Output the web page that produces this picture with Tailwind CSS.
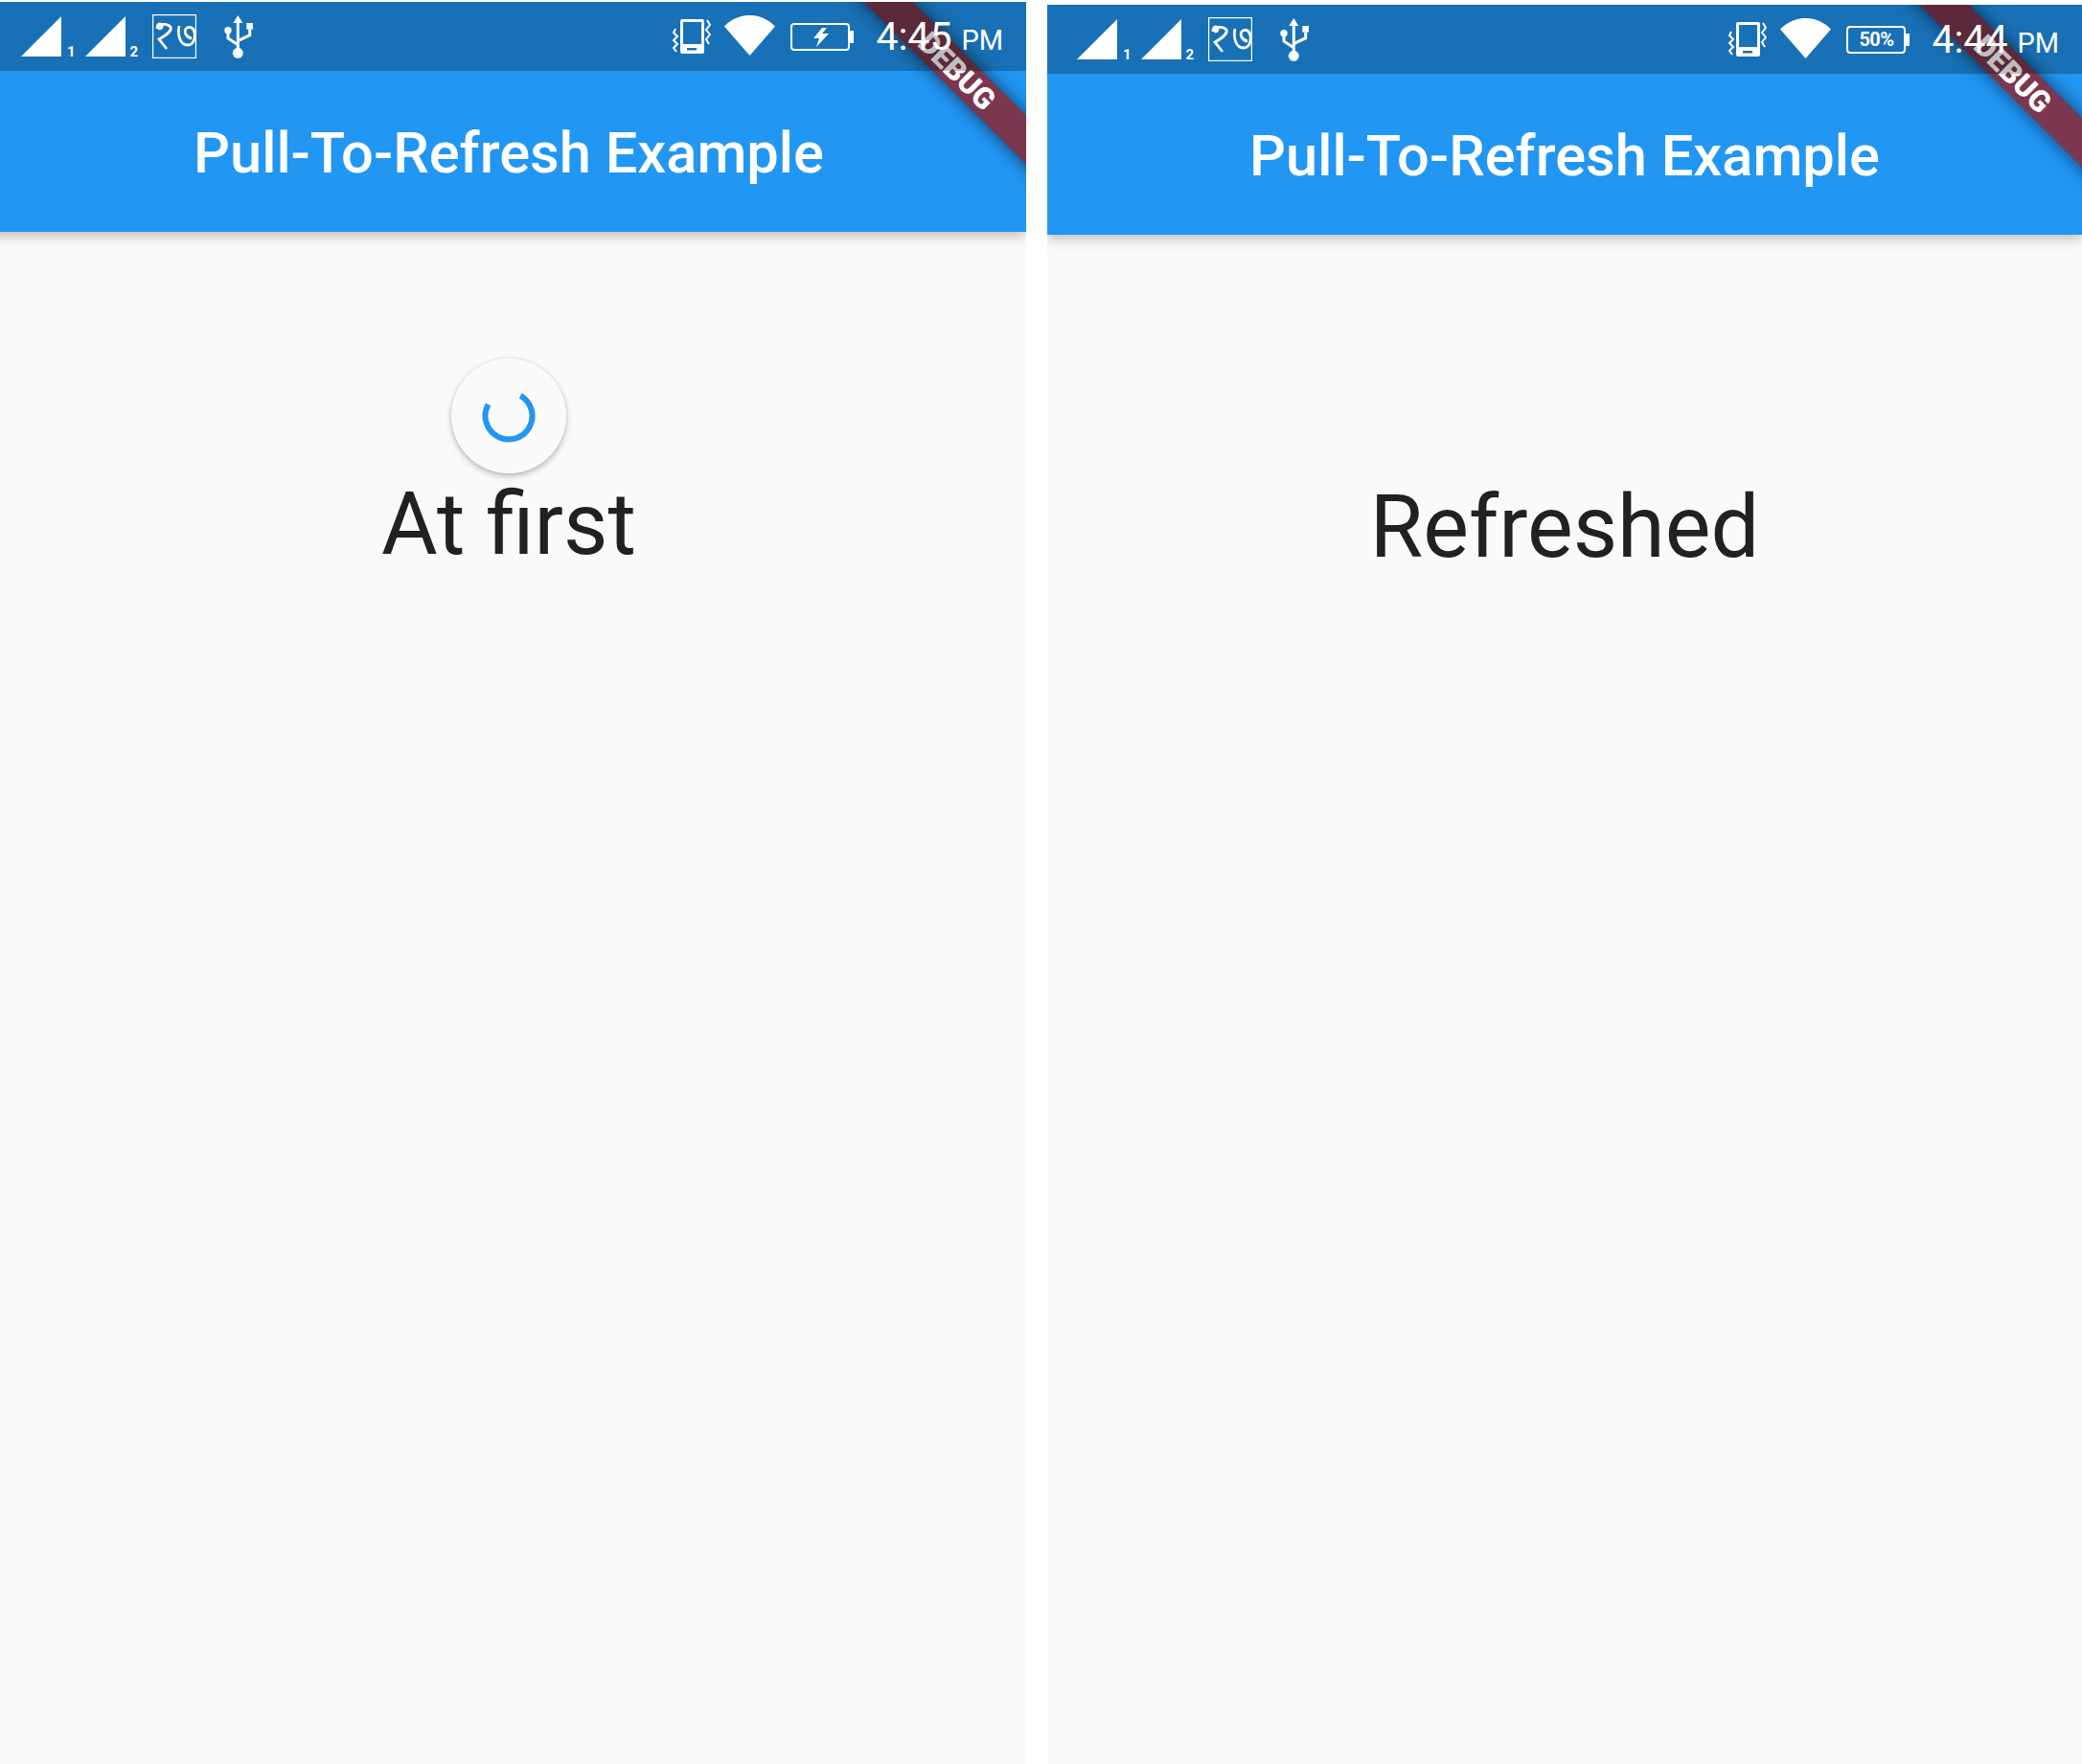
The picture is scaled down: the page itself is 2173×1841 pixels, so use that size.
<!DOCTYPE html>
<html lang="en">
<head>
  <meta charset="UTF-8">
  <title>Pull-To-Refresh Example</title>
  <script src="https://cdn.jsdelivr.net/npm/@tailwindcss/browser@4"></script>
</head>
<body class="bg-white font-['Roboto',sans-serif] overflow-hidden">
  <div class="flex items-start w-[2173px] h-[1841px]">

    <!-- left screen: cropped 9px on its left edge -->
    <div class="w-[1071px] h-[1839px] mt-[2px] overflow-hidden">
      <div class="relative w-[1080px] h-[1839px] -ml-[9px] overflow-hidden bg-[#fafafa]">
        <header class="bg-[#2196f3] h-[240px] pt-[78px] flex items-center justify-center text-white text-[59.6px] font-medium shadow-[0_4px_12px_rgba(0,0,0,0.25)]">Pull-To-Refresh Example</header>
        <p class="mt-[253px] text-center text-[90px] leading-[106px] text-[#212121]">At first</p>

        <!-- refresh indicator -->
        <div class="absolute left-[480px] top-[372px] w-[120px] h-[120px] rounded-full bg-[#fafafa] shadow-[0_3px_6px_rgba(0,0,0,0.25),0_0_3px_rgba(0,0,0,0.08)] flex items-center justify-center">
          <svg class="w-[60px] h-[60px]" viewBox="0 0 60 60" fill="none"><path d="M42.25 8.8A24.5 24.5 0 1 1 8.6 18.1" stroke="#2196f3" stroke-width="6"/></svg>
        </div>

        <!-- debug banner -->
        <div class="absolute -right-[128px] top-[54px] w-[400px] h-[36px] rotate-45 bg-[#7b3650] shadow-[0_0_18px_rgba(0,0,0,0.6)] flex items-center justify-center text-white text-[31px] leading-none font-black">DEBUG</div>

        <!-- status bar -->
        <div class="absolute left-0 top-0 w-full h-[72px] bg-black/25 flex items-center justify-between pl-[31px] pr-[24px] text-white">
          <div class="flex items-center">
            <svg class="w-[42px] h-[42px]" viewBox="0 0 42 42" fill="#fff"><path d="M0 42 42 0V42Z"/></svg>
            <span class="self-end ml-[6px] mb-[-1px] text-[15px] leading-[15px] font-bold">1</span>
            <svg class="ml-[10px] w-[42px] h-[42px]" viewBox="0 0 42 42" fill="#fff"><path d="M0 42 42 0V42Z"/></svg>
            <span class="self-end ml-[5px] mb-[-1px] text-[15px] leading-[15px] font-bold">2</span>
            <svg class="ml-[15px] w-[46px] h-[46px]" viewBox="0 0 46 46" fill="none" stroke="#fff" stroke-width="2.8"><rect x=".6" y=".6" width="44.8" height="44.8" stroke-width="1.2"/><path d="M5 15C5 9 9 9 10 12C10 15 7 16 6 13C8 10 15 9 19 13C21 18 12 23 7 26L15 36"/><path d="M28 12C26 22 29 32 37 32C43 32 45 25 44 19C43 13 38 12 35 15C33 18 35 24 41 25"/></svg>
            <svg class="ml-[29px] w-[30px] h-[45px]" viewBox="0 0 30 45" fill="#fff"><path d="M14.3 0 19.3 8H9.3Z"/><circle cx="14.3" cy="39.3" r="5.5"/><circle cx="4" cy="15.7" r="3.7"/><rect x="23.3" y="8" width="6.7" height="6.7"/><path d="M14.3 8V39M4 15.7V24L14.3 30.7M26.7 14.7V20.7L14.3 26.7" fill="none" stroke="#fff" stroke-width="3"/></svg>
          </div>
          <div class="flex items-center">
            <svg class="w-[40px] h-[36px]" viewBox="0 0 40 36" fill="none"><path fill="#fff" fill-rule="evenodd" d="M10 0H31A2 2 0 0 1 33 2V34A2 2 0 0 1 31 36H10A2 2 0 0 1 8 34V2A2 2 0 0 1 10 0ZM11 3V26H30V3ZM15 30V32.5H25V30Z"/><path d="M3 10 1 14 5 18 1 22 5 26 1 30 4 34M36 1 39 6 35 11 39 16 35 21 38 26" stroke="#fff" stroke-width="2"/></svg>
            <svg class="ml-[14px] -mt-[2px] w-[53px] h-[42px]" viewBox="0 0 53 42" fill="#fff"><path d="M26.5 42 0 11.5A36 36 0 0 1 53 11.5Z"/></svg>
            <svg class="ml-[16px] w-[66px] h-[29px]" viewBox="0 0 66 29" fill="none"><rect x="1" y="1" width="60" height="27" rx="3" stroke="#fff" stroke-width="2"/><path fill="#fff" d="M61 8H66V21H61Z"/><path fill="#fff" d="M33 5 24 16H30L27 25 40 11H33L38 5Z"/></svg>
            <div class="ml-[23px] mt-[3px] flex items-baseline">
              <span class="text-[41px] leading-[72px] w-[80px]">4:45</span>
              <span class="ml-[9px] text-[29px] leading-[72px]">PM</span>
            </div>
          </div>
        </div>
      </div>
    </div>

    <!-- right screen -->
    <div class="relative ml-[22px] mt-[5px] w-[1080px] h-[1836px] overflow-hidden bg-[#fafafa]">
      <header class="bg-[#2196f3] h-[240px] pt-[78px] flex items-center justify-center text-white text-[59.6px] font-medium shadow-[0_4px_12px_rgba(0,0,0,0.25)]">Pull-To-Refresh Example</header>
      <p class="mt-[253px] text-center text-[90px] leading-[106px] text-[#212121]">Refreshed</p>

      <!-- debug banner -->
      <div class="absolute -right-[128px] top-[54px] w-[400px] h-[36px] rotate-45 bg-[#7b3650] shadow-[0_0_18px_rgba(0,0,0,0.6)] flex items-center justify-center text-white text-[31px] leading-none font-black">DEBUG</div>

      <!-- status bar -->
      <div class="absolute left-0 top-0 w-full h-[72px] bg-black/25 flex items-center justify-between pl-[31px] pr-[24px] text-white">
        <div class="flex items-center">
          <svg class="w-[42px] h-[42px]" viewBox="0 0 42 42" fill="#fff"><path d="M0 42 42 0V42Z"/></svg>
          <span class="self-end ml-[6px] mb-[-1px] text-[15px] leading-[15px] font-bold">1</span>
          <svg class="ml-[10px] w-[42px] h-[42px]" viewBox="0 0 42 42" fill="#fff"><path d="M0 42 42 0V42Z"/></svg>
          <span class="self-end ml-[5px] mb-[-1px] text-[15px] leading-[15px] font-bold">2</span>
          <svg class="ml-[15px] w-[46px] h-[46px]" viewBox="0 0 46 46" fill="none" stroke="#fff" stroke-width="2.8"><rect x=".6" y=".6" width="44.8" height="44.8" stroke-width="1.2"/><path d="M5 15C5 9 9 9 10 12C10 15 7 16 6 13C8 10 15 9 19 13C21 18 12 23 7 26L15 36"/><path d="M28 12C26 22 29 32 37 32C43 32 45 25 44 19C43 13 38 12 35 15C33 18 35 24 41 25"/></svg>
          <svg class="ml-[29px] w-[30px] h-[45px]" viewBox="0 0 30 45" fill="#fff"><path d="M14.3 0 19.3 8H9.3Z"/><circle cx="14.3" cy="39.3" r="5.5"/><circle cx="4" cy="15.7" r="3.7"/><rect x="23.3" y="8" width="6.7" height="6.7"/><path d="M14.3 8V39M4 15.7V24L14.3 30.7M26.7 14.7V20.7L14.3 26.7" fill="none" stroke="#fff" stroke-width="3"/></svg>
        </div>
        <div class="flex items-center">
          <svg class="w-[40px] h-[36px]" viewBox="0 0 40 36" fill="none"><path fill="#fff" fill-rule="evenodd" d="M10 0H31A2 2 0 0 1 33 2V34A2 2 0 0 1 31 36H10A2 2 0 0 1 8 34V2A2 2 0 0 1 10 0ZM11 3V26H30V3ZM15 30V32.5H25V30Z"/><path d="M3 10 1 14 5 18 1 22 5 26 1 30 4 34M36 1 39 6 35 11 39 16 35 21 38 26" stroke="#fff" stroke-width="2"/></svg>
          <svg class="ml-[14px] -mt-[2px] w-[53px] h-[42px]" viewBox="0 0 53 42" fill="#fff"><path d="M26.5 42 0 11.5A36 36 0 0 1 53 11.5Z"/></svg>
          <div class="relative ml-[16px] w-[66px] h-[29px]">
            <svg class="w-[66px] h-[29px]" viewBox="0 0 66 29" fill="none"><rect x="1" y="1" width="60" height="27" rx="3" stroke="#fff" stroke-width="2"/><path fill="#fff" d="M61 8H66V21H61Z"/></svg>
            <span class="absolute left-[13px] top-0 text-[20px] leading-[29px] font-bold tracking-tight">50%</span>
          </div>
          <div class="ml-[23px] mt-[3px] flex items-baseline">
            <span class="text-[41px] leading-[72px] w-[80px]">4:44</span>
            <span class="ml-[9px] text-[29px] leading-[72px]">PM</span>
          </div>
        </div>
      </div>
    </div>

  </div>
</body>
</html>
